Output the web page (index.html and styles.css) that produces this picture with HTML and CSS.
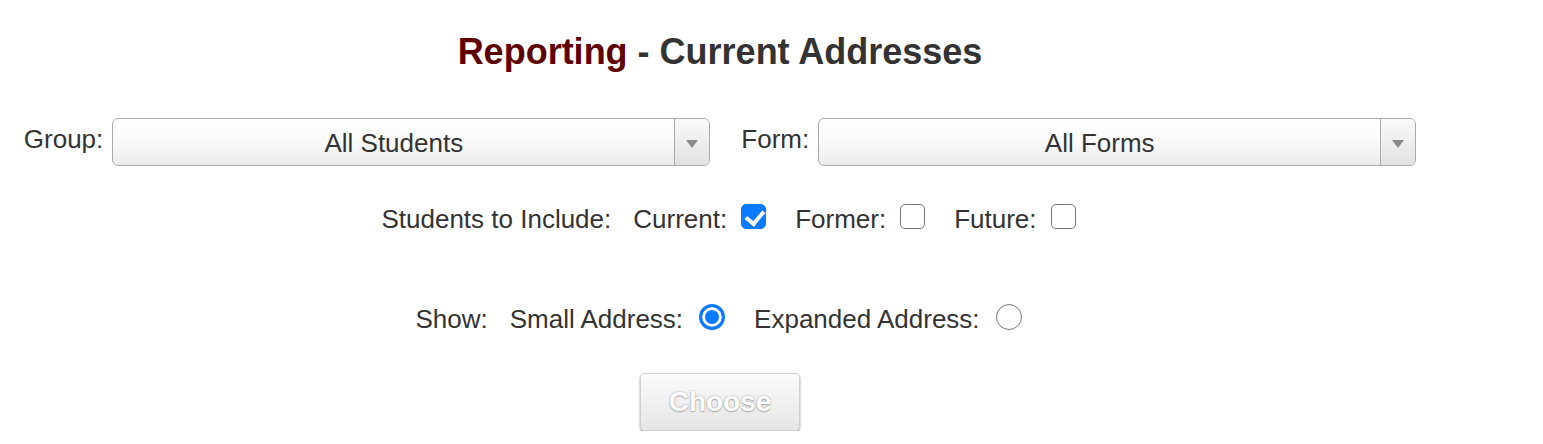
FILE: index.html
```html
<!DOCTYPE html>
<html lang="en">
<head>
<meta charset="utf-8">
<title>Reporting - Current Addresses</title>
<link rel="stylesheet" href="styles.css">
</head>
<body>
<main class="page">
  <h1 class="title"><span class="title-section">Reporting</span> - Current Addresses</h1>

  <div class="filters">
    <label class="field-label" for="group">Group:</label>
    <div class="select">
      <span class="select-value" id="group">All Students</span>
      <span class="select-arrow"><span class="triangle"></span></span>
    </div>
    <label class="field-label form-label" for="form">Form:</label>
    <div class="select">
      <span class="select-value" id="form">All Forms</span>
      <span class="select-arrow"><span class="triangle"></span></span>
    </div>
  </div>

  <div class="option-row include-row">
    <span class="row-label">Students to Include:</span>
    <label class="opt">Current: <input type="checkbox" class="check" checked></label>
    <label class="opt">Former: <input type="checkbox" class="check"></label>
    <label class="opt">Future: <input type="checkbox" class="check"></label>
  </div>

  <div class="option-row show-row">
    <span class="row-label">Show:</span>
    <label class="opt">Small Address: <input type="radio" name="show" class="radio" checked></label>
    <label class="opt">Expanded Address: <input type="radio" name="show" class="radio"></label>
  </div>

  <div class="actions">
    <button class="choose" type="button" disabled>Choose</button>
  </div>
</main>
</body>
</html>
```

FILE: styles.css
```css
* { box-sizing: border-box; }

body {
  margin: 0;
  background: #fff;
  font-family: "Liberation Sans", Arial, Helvetica, sans-serif;
  color: #333;
}

.page {
  width: 1440px;
  padding-top: 32px;
}

.title {
  margin: 0;
  text-align: center;
  font-size: 36px;
  line-height: 40px;
  font-weight: bold;
  color: #333;
}

.title-section { color: #5e0000; }

.filters {
  margin-top: 46px;
  display: flex;
  justify-content: center;
  align-items: flex-start;
}

.field-label {
  font-size: 26px;
  line-height: 42px;
  margin-right: 9px;
}

.form-label { margin-left: 31px; }

.select {
  width: 598px;
  height: 48px;
  display: flex;
  border: 1px solid #aaa;
  border-radius: 6px;
  background: linear-gradient(#ffffff 0%, #fbfbfb 45%, #ececec 100%);
  overflow: hidden;
}

.select-value {
  flex: 1;
  text-align: center;
  font-size: 26px;
  line-height: 47px;
  padding-top: 1px;
  color: #333;
}

.select-arrow {
  width: 35px;
  border-left: 1px solid #aaa;
  display: flex;
  align-items: center;
  justify-content: center;
  background: linear-gradient(#fafafa, #e2e2e2);
}

.triangle {
  width: 0;
  height: 0;
  border-left: 6px solid transparent;
  border-right: 6px solid transparent;
  border-top: 8px solid #8a8a8a;
  margin-top: 3px;
}

.option-row {
  display: flex;
  justify-content: center;
  align-items: flex-start;
  font-size: 26px;
  line-height: 30px;
}

.include-row {
  margin-top: 38px;
  padding-left: 17px;
}

.show-row {
  margin-top: 70px;
  padding-right: 3px;
}

.row-label { margin-right: 22px; }

.opt {
  display: flex;
  align-items: flex-start;
  margin-right: 29px;
}

.opt:last-child { margin-right: 0; }

.check {
  appearance: none;
  -webkit-appearance: none;
  margin: 0 0 0 14px;
  width: 25px;
  height: 25px;
  border: 1px solid #767676;
  border-radius: 5px;
  background: #fff;
  position: relative;
}

.check:checked {
  background: #0a7aff;
  border-color: #0a7aff;
}

.check:checked::after {
  content: "";
  position: absolute;
  left: 7px;
  top: 2px;
  width: 8px;
  height: 14px;
  border-right: 4px solid #fff;
  border-bottom: 4px solid #fff;
  transform: rotate(40deg);
}

.radio {
  appearance: none;
  -webkit-appearance: none;
  margin: 0 0 0 16px;
  width: 26px;
  height: 26px;
  border: 1px solid #767676;
  border-radius: 50%;
  background: #fff;
}

.radio:checked {
  border: 3px solid #0a7aff;
  background: #0a7aff;
  box-shadow: inset 0 0 0 3px #fff;
}

.actions {
  margin-top: 39px;
  display: flex;
  justify-content: center;
}

.choose {
  width: 160px;
  height: 58px;
  border: 1px solid #cfcfcf;
  border-radius: 5px;
  background: linear-gradient(#fbfbfb, #e6e6e6);
  box-shadow: 0 1px 2px rgba(0, 0, 0, 0.45);
  font-family: "Liberation Sans", Arial, sans-serif;
  font-size: 28px;
  font-weight: bold;
  color: #fff;
  text-shadow: 0 0 2px rgba(0, 0, 0, 0.4), 0 1px 1px rgba(0, 0, 0, 0.2);
  padding: 0;
}
```
